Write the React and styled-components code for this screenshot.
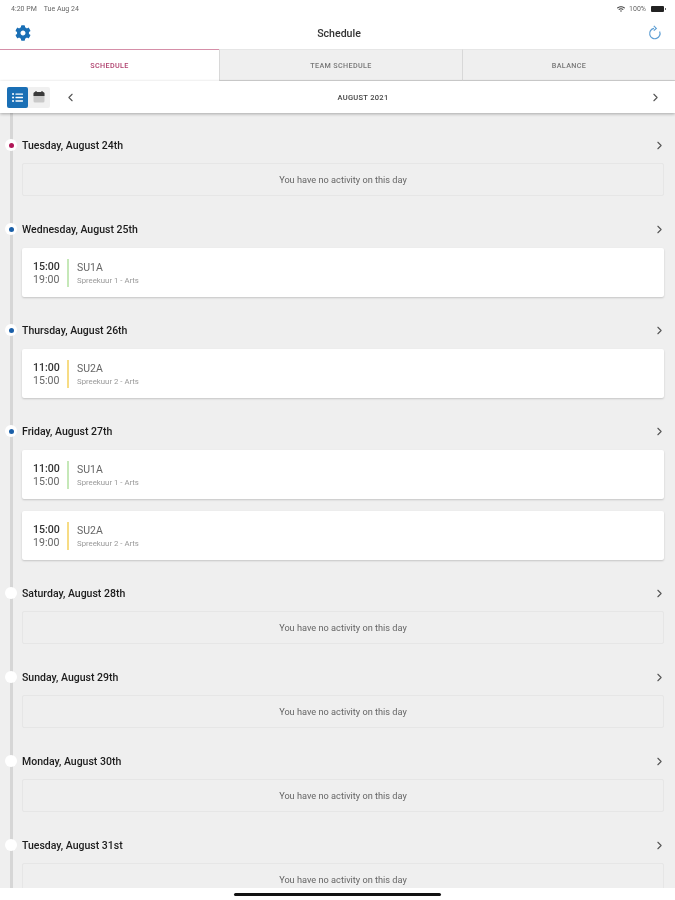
import React from "react";
import styled, { createGlobalStyle } from "styled-components";
import { ChevronLeft, ChevronRight } from "lucide-react";
import { FaCog, FaWifi, FaListUl } from "react-icons/fa";

const GlobalStyle = createGlobalStyle`
  html, body {
    margin: 0;
    padding: 0;
    background: #fff;
    font-family: Roboto, "Liberation Sans", sans-serif;
  }
  * {
    box-sizing: border-box;
  }
`;

// the reference is a soft, upscaled capture
const Screen = styled.div`
  display: flex;
  flex-direction: column;
  width: 675px;
  height: 900px;
  overflow: hidden;
  background: #fff;
  filter: blur(0.35px);
`;

const StatusBar = styled.div`
  display: flex;
  justify-content: space-between;
  align-items: center;
  height: 17px;
  padding: 0 10px 0 11px;
  font-size: 7px;
  color: #666;
`;

const StatusGroup = styled.div`
  display: flex;
  align-items: center;
  gap: ${({ $gap }) => $gap}px;
`;

const Battery = styled.div`
  position: relative;
  width: 13px;
  height: 6px;
  background: #222;
  border-radius: 1px;
  margin: 0 1px 0 1px;

  &::after {
    content: "";
    position: absolute;
    right: -2px;
    top: 2px;
    width: 1px;
    height: 2px;
    background: #666;
  }
`;

const NavBar = styled.div`
  display: flex;
  justify-content: space-between;
  align-items: center;
  height: 32px;
  padding: 0 12px 0 15px;
  color: #1a6fb5;
`;

const NavTitle = styled.div`
  font-size: 10.6px;
  font-weight: 500;
  color: #333;
`;

const Tabs = styled.div`
  display: flex;
  height: 32px;
`;

const Tab = styled.div`
  display: flex;
  justify-content: center;
  align-items: center;
  width: ${({ $width }) => $width}px;
  font-size: 7.2px;
  font-weight: 500;
  letter-spacing: 0.35px;
  background: ${({ $active }) => ($active ? "#fff" : "#efefef")};
  color: ${({ $active }) => ($active ? "#b0426e" : "#777")};
  border-top: 1px solid ${({ $active }) => ($active ? "#d58fa8" : "#e6e6e6")};
  border-bottom: 1px solid ${({ $active }) => ($active ? "#fff" : "#d2d2d2")};
  border-left: ${({ $divider }) => ($divider ? "1px solid #d8d8d8" : "none")};
`;

const DateBar = styled.div`
  display: flex;
  align-items: center;
  height: 32px;
  padding: 0 13px 0 7px;
  background: #fff;
  box-shadow: 0 1px 3px rgba(0, 0, 0, 0.3);
  position: relative;
  z-index: 2;
`;

const Toggle = styled.div`
  display: flex;
  width: 43px;
  height: 21px;
  background: #f0f0f0;
  border-radius: 2px;
  margin-right: 14px;
`;

const ToggleButton = styled.div`
  display: flex;
  justify-content: center;
  align-items: center;
  width: ${({ $active }) => ($active ? 21 : 22)}px;
  border-radius: 2px;
  background: ${({ $active }) => ($active ? "#1a6fb5" : "transparent")};
  color: #fff;
`;

const Month = styled.div`
  flex: 1;
  text-align: center;
  font-size: 7.5px;
  font-weight: 500;
  letter-spacing: 0.3px;
  color: #444;
`;

const Content = styled.div`
  flex: 1;
  position: relative;
  overflow: hidden;
  padding: 22px 11px 0 22px;
  background: #efefef;
`;

const TimelineLine = styled.div`
  position: absolute;
  left: 10px;
  top: 0;
  bottom: 0;
  width: 3px;
  background: #d6d6d6;
`;

const Day = styled.section`
  position: relative;
  margin-bottom: 23px;
`;

const DayHeader = styled.div`
  display: flex;
  justify-content: space-between;
  align-items: center;
  height: 20px;
  font-size: 10.5px;
  font-weight: 500;
  color: #1c1c1c;
`;

const DayDot = styled.div`
  position: absolute;
  left: -17px;
  top: 4px;
  display: flex;
  justify-content: center;
  align-items: center;
  width: 12px;
  height: 12px;
  border-radius: 50%;
  background: #fff;

  &::after {
    content: "";
    width: 5px;
    height: 5px;
    border-radius: 50%;
    background: ${({ $color }) => $color || "transparent"};
  }
`;

const Chevron = styled(ChevronRight)`
  margin-right: -2px;
  color: #555;
`;

const EmptyCard = styled.div`
  display: flex;
  justify-content: center;
  align-items: center;
  height: 33px;
  margin-top: 8px;
  padding-bottom: 1px;
  border: 1px solid #e6e6e6;
  border-radius: 2px;
  font-size: 9.2px;
  color: #666;
`;

const Activities = styled.div`
  display: flex;
  flex-direction: column;
  gap: 12px;
  margin-top: 9px;
`;

const ActivityCard = styled.div`
  display: flex;
  align-items: center;
  height: 49px;
  padding-left: 11px;
  background: #fff;
  border-radius: 2px;
  box-shadow: 0 1px 2px rgba(0, 0, 0, 0.18);
`;

const Times = styled.div`
  display: flex;
  flex-direction: column;
  gap: 2px;
  width: 34px;
  font-size: 10.6px;
  line-height: 11px;
  color: #666;

  b {
    font-weight: 500;
    color: #333;
  }
`;

const ColorBar = styled.div`
  width: 2px;
  height: 28px;
  margin-right: 8px;
  background: ${({ $color }) => $color};
`;

const ActivityName = styled.div`
  font-size: 10.5px;
  color: #666;
  margin-bottom: 2px;
`;

const ActivitySub = styled.div`
  font-size: 7.8px;
  color: #999;
`;

const HomeBar = styled.div`
  display: flex;
  justify-content: center;
  align-items: center;
  height: 12px;
  background: #fff;
  position: relative;
`;

const HomeIndicator = styled.div`
  width: 207px;
  height: 3px;
  border-radius: 2px;
  background: #111;
`;

const GREEN = "#c5e8b8";
const YELLOW = "#f7dc84";
const SU1 = { start: "15:00", end: "19:00", name: "SU1A", sub: "Spreekuur 1 - Arts", color: GREEN };
const SU2 = { start: "11:00", end: "15:00", name: "SU2A", sub: "Spreekuur 2 - Arts", color: YELLOW };

const days = [
  { label: "Tuesday, August 24th", dot: "#b01657" },
  { label: "Wednesday, August 25th", dot: "#1a5fa8", items: [SU1] },
  { label: "Thursday, August 26th", dot: "#1a5fa8", items: [SU2] },
  {
    label: "Friday, August 27th",
    dot: "#1a5fa8",
    items: [
      { ...SU1, start: "11:00", end: "15:00" },
      { ...SU2, start: "15:00", end: "19:00" },
    ],
  },
  { label: "Saturday, August 28th" },
  { label: "Sunday, August 29th" },
  { label: "Monday, August 30th" },
  { label: "Tuesday, August 31st" },
];

const RefreshIcon = () => (
  <svg width="16" height="16" viewBox="0 0 16 16" fill="none" stroke="#5f9fd4" strokeWidth="1.2">
    <path d="M7 3.4A5.2 5.2 0 1 0 12.6 6.4" />
    <path d="M6.8 0.9 9.3 3.4 6.8 5.6" />
  </svg>
);

const CalendarIcon = () => (
  <svg width="12" height="12" viewBox="0 0 12 12">
    <rect x="0.5" y="1" width="11" height="10.5" rx="1.5" fill="#c9c9c9" />
    <path d="M0.5 2.5A1.5 1.5 0 0 1 2 1h8a1.5 1.5 0 0 1 1.5 1.5V5h-11z" fill="#3a3a3a" />
    <path d="M3 0v2.4M9 0v2.4" stroke="#3a3a3a" strokeWidth="1.2" />
  </svg>
);

const App = () => {
  return (
    <Screen>
      <GlobalStyle />
      <StatusBar>
        <StatusGroup $gap={7}>
          <span>4:20 PM</span>
          <span>Tue Aug 24</span>
        </StatusGroup>
        <StatusGroup $gap={4}>
          <FaWifi size={8} color="#444" />
          <span>100%</span>
          <Battery />
        </StatusGroup>
      </StatusBar>
      <NavBar>
        <FaCog size={16} />
        <NavTitle>Schedule</NavTitle>
        <RefreshIcon />
      </NavBar>
      <Tabs>
        <Tab $width={219} $active>
          SCHEDULE
        </Tab>
        <Tab $width={243} $divider>
          TEAM SCHEDULE
        </Tab>
        <Tab $width={213} $divider>
          BALANCE
        </Tab>
      </Tabs>
      <DateBar>
        <Toggle>
          <ToggleButton $active>
            <FaListUl size={11} />
          </ToggleButton>
          <ToggleButton>
            <CalendarIcon />
          </ToggleButton>
        </Toggle>
        <ChevronLeft size={13} color="#555" />
        <Month>AUGUST 2021</Month>
        <ChevronRight size={13} color="#555" />
      </DateBar>
      <Content>
        <TimelineLine />
        {days.map((day) => (
          <Day key={day.label}>
            <DayDot $color={day.dot} />
            <DayHeader>
              {day.label}
              <Chevron size={13} />
            </DayHeader>
            {day.items ? (
              <Activities>
                {day.items.map((item) => (
                  <ActivityCard key={item.name}>
                    <Times>
                      <b>{item.start}</b>
                      <span>{item.end}</span>
                    </Times>
                    <ColorBar $color={item.color} />
                    <div>
                      <ActivityName>{item.name}</ActivityName>
                      <ActivitySub>{item.sub}</ActivitySub>
                    </div>
                  </ActivityCard>
                ))}
              </Activities>
            ) : (
              <EmptyCard>You have no activity on this day</EmptyCard>
            )}
          </Day>
        ))}
      </Content>
      <HomeBar>
        <HomeIndicator />
      </HomeBar>
    </Screen>
  );
};

export default App;
